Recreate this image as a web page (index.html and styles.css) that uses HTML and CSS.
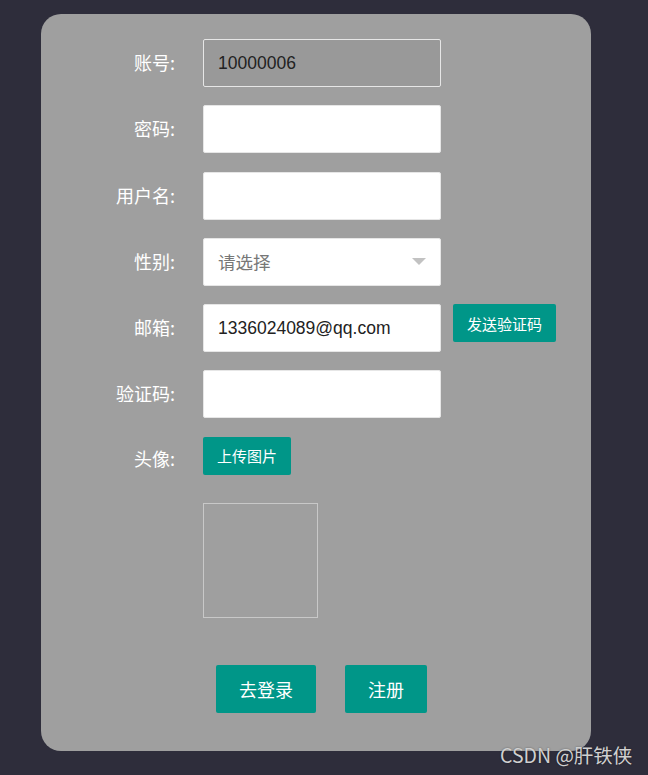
FILE: index.html
```html
<!DOCTYPE html>
<html>
<head>
  <title>注册</title>
  <link rel="stylesheet" href="styles.css">
</head>
<body>

<div class="card">
  <form class="reg-form">
    <div class="form-item">
      <label class="form-label">账号:</label>
      <input class="form-input readonly" type="text" value="10000006" readonly>
    </div>
    <div class="form-item">
      <label class="form-label">密码:</label>
      <input class="form-input" type="password">
    </div>
    <div class="form-item">
      <label class="form-label">用户名:</label>
      <input class="form-input" type="text">
    </div>
    <div class="form-item">
      <label class="form-label">性别:</label>
      <div class="form-input select">
        <span class="placeholder">请选择</span>
        <i class="arrow"></i>
      </div>
    </div>
    <div class="form-item">
      <label class="form-label">邮箱:</label>
      <input class="form-input" type="text" value="1336024089@qq.com">
      <button type="button" class="btn btn-sm btn-side">发送验证码</button>
    </div>
    <div class="form-item">
      <label class="form-label">验证码:</label>
      <input class="form-input" type="text">
    </div>
    <div class="form-item top">
      <label class="form-label">头像:</label>
      <button type="button" class="btn btn-sm">上传图片</button>
    </div>
    <div class="form-item preview-row">
      <div class="preview"></div>
    </div>
    <div class="actions">
      <button type="button" class="btn btn-lg">去登录</button>
      <button type="submit" class="btn btn-lg">注册</button>
    </div>
  </form>
</div>

<div class="watermark">CSDN @肝铁侠</div>

</body>
</html>
```

FILE: styles.css
```css
body {
  margin: 0;
  background-color: #2e2d3b;
  font-family: "Liberation Sans", "Noto Sans CJK SC", sans-serif;
  height: 775px;
  overflow: hidden;
}
.card {
  width: 550px;
  height: 737px;
  margin: 14px 0 0 41px;
  background: #9f9f9f;
  border-radius: 20px;
  box-sizing: border-box;
  padding-top: 25px;
}
.form-item {
  display: flex;
  align-items: center;
  height: 48px;
  margin-bottom: 18.25px;
}
.form-item.top {
  align-items: flex-start;
}
.form-item.top .form-label {
  line-height: 47px;
}
.form-label {
  width: 134px;
  margin-right: 28px;
  text-align: right;
  color: #fff;
  font-size: 18px;
  line-height: 22px;
  margin-top: -2px;
  font-family: "Noto Sans CJK SC", sans-serif;
}
.form-input {
  width: 238px;
  height: 48px;
  box-sizing: border-box;
  padding: 0 14px;
  border: 1px solid #e6e6e6;
  border-radius: 2px;
  background: #fff;
  font-size: 17.5px;
  font-family: "Liberation Sans", "Noto Sans CJK SC", sans-serif;
  color: #222;
  outline: none;
}
.form-input.readonly {
  background: #999;
  border-color: #e6e6e6;
  color: #222;
}
.select {
  display: flex;
  align-items: center;
  justify-content: space-between;
}
.placeholder {
  color: #777;
  font-family: "Noto Sans CJK SC", sans-serif;
}
.arrow {
  width: 0;
  height: 0;
  border-left: 7px solid transparent;
  border-right: 7px solid transparent;
  border-top: 7px solid #c2c2c2;
}
.btn {
  background: #009688;
  color: #fff;
  border: none;
  border-radius: 2px;
  font-family: "Noto Sans CJK SC", sans-serif;
  cursor: pointer;
}
.btn-sm {
  height: 38px;
  padding: 0 14px;
  font-size: 15px;
}
.btn-side {
  margin-left: 12px;
  align-self: flex-start;
}
.btn-lg {
  height: 48px;
  padding: 0 23px;
  font-size: 18px;
}
.preview-row {
  height: 115px;
  padding-left: 162px;
  margin-bottom: 47px;
}
.preview {
  width: 115px;
  height: 115px;
  box-sizing: border-box;
  border: 1px solid #c8c8c8;
}
.actions {
  display: flex;
  gap: 29px;
  padding-left: 175px;
}
.watermark {
  position: absolute;
  left: 500px;
  top: 740px;
  color: #d0d0d0;
  font-size: 19.5px;
  font-family: "Noto Sans CJK SC", sans-serif;
  text-shadow: 0 0 2px rgba(0,0,0,0.4);
}
```
